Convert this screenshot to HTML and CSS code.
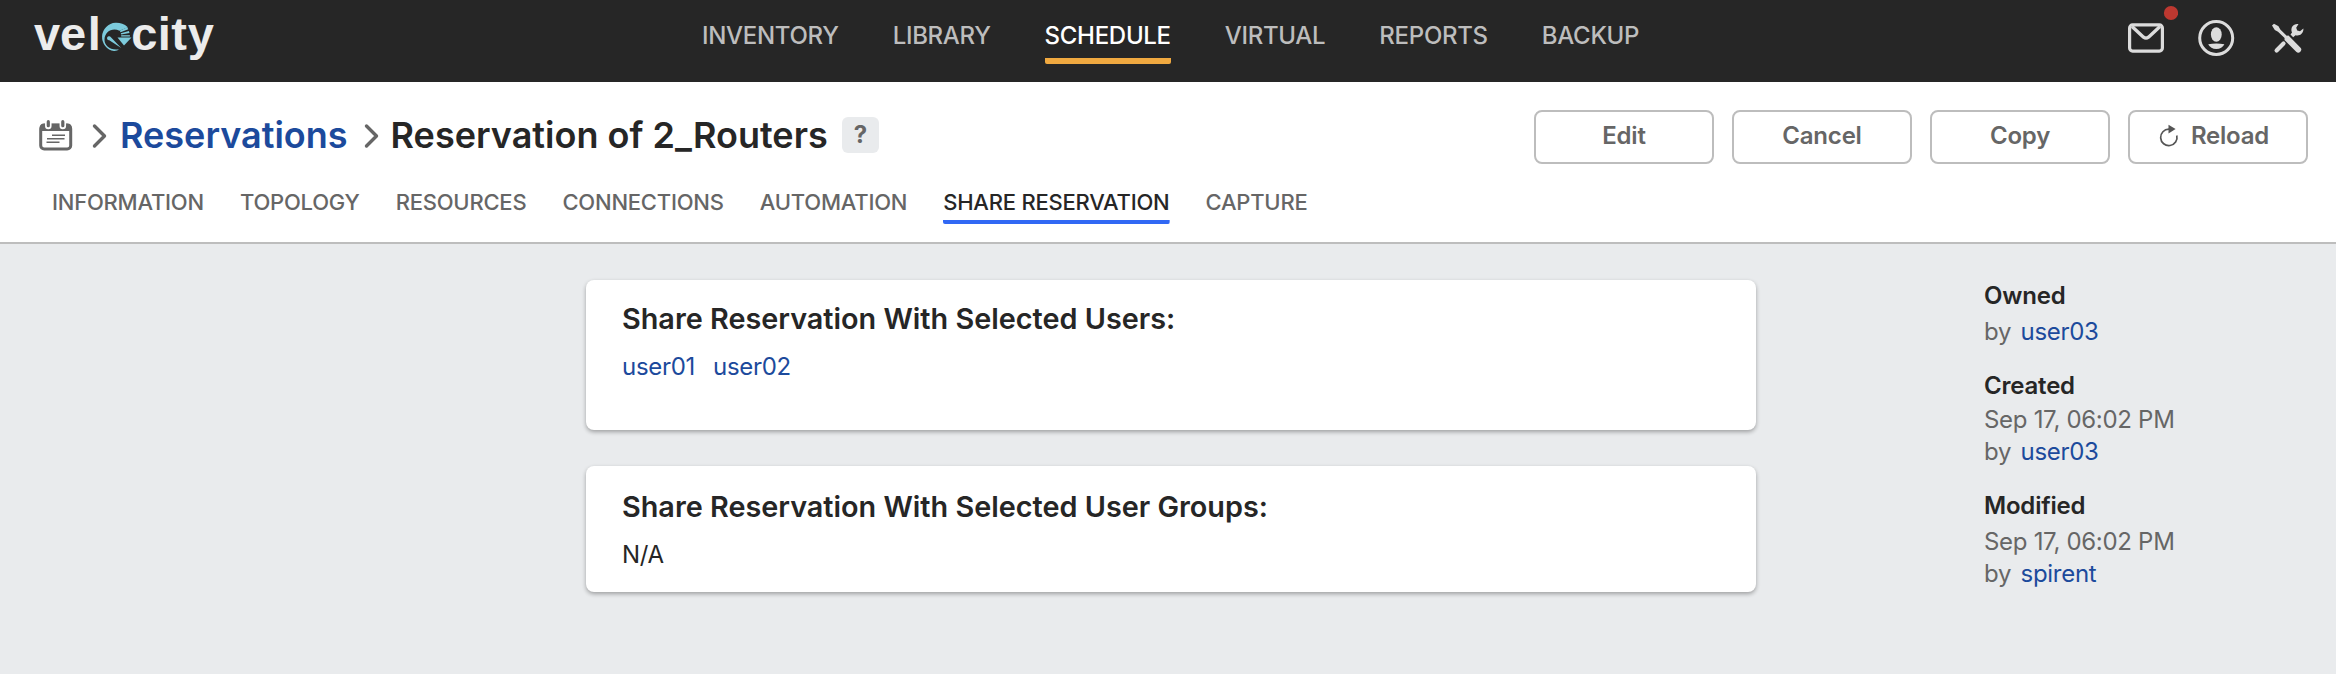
FILE: index.html
```html
<!DOCTYPE html>
<html lang="en">
<head>
<meta charset="utf-8">
<title>Velocity - Reservation of 2_Routers</title>
<link rel="stylesheet" href="styles.css">
</head>
<body>
<header class="topbar">
  <svg class="logo" width="190" height="60" viewBox="30 4 190 60">
    <text class="logo-text" y="49.600" x="34 60 87.700">vel</text>
    <text class="logo-text" y="49.600" x="131.200 157.700 171.300 187.800">city</text>
    <g class="logo-gauge">
      <path d="M127.800 27.200C124 23.500 119.500 22.600 115.500 22.800A14.200 14.200 0 0 0 114 51C116 51.100 118 50.400 118.800 49.300C110 50.500 104.300 45.500 104.500 39.500C104.800 32 112 27.300 119.500 30.800Z"/>
      <path d="M119.800 30.800L127.200 27.300L128.300 29.200L120.500 32.200ZM120.800 33.300L128.900 31L129.500 32.900L121.200 34.600ZM121.200 35.200H129.900V36.600H121.200ZM117.500 37.600H131.500L124 45.400Z"/>
      <path d="M107 38.300A2.100 2.100 0 0 1 110.900 37.200L121.200 48L109.300 40.200A2.100 2.100 0 0 1 107 38.300Z"/>
    </g>
  </svg>
  <nav class="mainnav">
    <a>INVENTORY</a><a>LIBRARY</a><a class="active">SCHEDULE</a><a>VIRTUAL</a><a>REPORTS</a><a>BACKUP</a>
  </nav>
  <div class="tools">
    <svg width="50" height="54" viewBox="2128 4 50 54">
      <g fill="none" stroke="#dcdcdc" stroke-width="3.200"><rect x="2129.600" y="24.900" width="32.800" height="26.200" rx="3"/><path d="M2132 26.500L2143.500 37.200Q2146 39 2148.500 37.200L2160 26.500" stroke-width="3.400"/></g>
      <circle cx="2171" cy="13" r="7.100" fill="#bd3830"/>
    </svg>
    <svg width="38" height="38" viewBox="2197 19 38 38">
      <circle cx="2216.200" cy="38" r="16.500" fill="none" stroke="#dcdcdc" stroke-width="3"/>
      <ellipse cx="2216.300" cy="34.500" rx="5.400" ry="7.300" fill="#dcdcdc"/>
      <path d="M2208.200 44.200Q2216.300 42.600 2224.400 44.200Q2222 48.900 2216.300 48.900Q2210.600 48.900 2208.200 44.200Z" fill="#dcdcdc"/>
    </svg>
    <svg width="36" height="36" viewBox="2270 20 36 36">
      <path d="M2272 25.600L2274 23.800L2278.500 26.300L2280.300 29.400L2286.700 35.700L2288.500 35.400L2300.300 47.500A2.900 2.900 0 0 1 2296.200 51.700L2284.500 40L2284.600 38L2278 31.800L2274.800 30Z" fill="#dcdcdc"/>
      <path d="M2276.600 50.500L2283.500 43.600" stroke="#dcdcdc" stroke-width="4.200" stroke-linecap="round"/>
      <path d="M2290.500 34.600L2292 32.500C2290 27.500 2293.500 23.200 2298.500 24L2296.200 27.700L2297.200 30.500L2300 31.200L2303.400 28.500C2303.800 33.500 2299.500 36.500 2295.500 35.200L2293.200 37.200Z" fill="#dcdcdc"/>
    </svg>
  </div>
</header>
<section class="subheader">
  <div class="titlerow">
    <svg class="cal" width="34" height="32" viewBox="39 120 34 32">
      <rect x="40.700" y="125.200" width="30" height="23.800" rx="3.500" fill="none" stroke="#666" stroke-width="3"/>
      <path d="M40 131V127Q40 123.500 44 123.500H67.500Q71.500 123.500 71.500 127V131Z" fill="#666"/>
      <path d="M48.300 121.500V126M62.800 121.500V126" stroke="#fff" stroke-width="6.500" stroke-linecap="round"/>
      <path d="M48.300 121.700V125.700M62.800 121.700V125.700" stroke="#666" stroke-width="3.200" stroke-linecap="round"/>
      <path d="M52 135.200H65M47 138.700H64.500M46.500 142.300H59.500" stroke="#666" stroke-width="1.600"/>
    </svg>
    <svg class="chev" width="16" height="26" viewBox="0 0 16 26"><path d="M2.500 3L12.500 13L2.500 23"/></svg>
    <a class="crumb">Reservations</a>
    <svg class="chev second" width="16" height="26" viewBox="0 0 16 26"><path d="M2.500 3L12.500 13L2.500 23"/></svg>
    <h1>Reservation of 2_Routers</h1>
    <span class="help">?</span>
    <div class="actions">
      <button>Edit</button><button>Cancel</button><button>Copy</button>
      <button class="reload"><svg width="20" height="24" viewBox="2160 125 20 24"><path d="M2170 130.200A8.200 8.200 0 1 0 2177.800 136.500" fill="none" stroke="#555" stroke-width="1.700"/><path d="M2169.500 125.700L2176.600 130.100L2169.500 134.500Z" fill="#555"/></svg>Reload</button>
    </div>
  </div>
  <nav class="tabs">
    <a>INFORMATION</a><a>TOPOLOGY</a><a>RESOURCES</a><a>CONNECTIONS</a><a>AUTOMATION</a><a class="active">SHARE RESERVATION</a><a>CAPTURE</a>
  </nav>
</section>
<main class="content">
  <div class="cards">
    <section class="card users">
      <h2>Share Reservation With Selected Users:</h2>
      <p class="links"><a>user01</a><a>user02</a></p>
    </section>
    <section class="card groups">
      <h2>Share Reservation With Selected User Groups:</h2>
      <p>N/A</p>
    </section>
  </div>
  <aside class="meta">
    <div class="block"><h3>Owned</h3><p class="first">by <a>user03</a></p></div>
    <div class="block tight"><h3>Created</h3><p class="first">Sep 17, 06:02 PM</p><p>by <a>user03</a></p></div>
    <div class="block"><h3>Modified</h3><p class="first">Sep 17, 06:02 PM</p><p>by <a>spirent</a></p></div>
  </aside>
</main>
</body>
</html>
```
FILE: styles.css
```css
* { box-sizing: border-box; }
body {
  margin: 0;
  height: 674px;
  overflow: hidden;
  display: flex;
  flex-direction: column;
  background: #e9ebed;
  color: #262626;
  font: 24px/32px Inter, "Liberation Sans", sans-serif;
  letter-spacing: -.3px;
}
h1, h2, h3, p { margin: 0; }

.topbar {
  height: 82px;
  flex: none;
  display: flex;
  align-items: flex-start;
  background: #262626;
}
.logo { margin: 4px 0 0 30px; }
.logo-text { font: 700 47px "Liberation Sans", Arial, sans-serif; fill: #ececec; letter-spacing: 0; }
.logo-gauge { fill: #7dcbdc; }
.mainnav {
  display: flex;
  gap: 54px;
  margin: 16px 0 0 482px;
}
.mainnav a {
  height: 48px;
  line-height: 40px;
  font-weight: 500;
  color: #bdbdbd;
  white-space: nowrap;
}
.mainnav .active {
  color: #fff;
  background: linear-gradient(#f0a940, #f0a940) bottom / 100% 6px no-repeat;
  border-radius: 2px;
}
.tools {
  display: flex;
  align-items: flex-start;
  margin: 4px 30px 0 auto;
}
.tools svg:nth-child(2) { margin: 15px 35px 0 19px; }
.tools svg:nth-child(3) { margin-top: 16px; }

.subheader {
  height: 162px;
  flex: none;
  background: #fff;
  border-bottom: 2px solid #bdbdbd;
}
.titlerow {
  display: flex;
  align-items: center;
  height: 54px;
  margin: 28px 28px 0 39px;
  white-space: nowrap;
}
.cal, .chev { margin-top: -2px; }
.chev { margin-left: 19px; fill: none; stroke: #666; stroke-width: 3.4; stroke-linecap: round; stroke-linejoin: round; }
.chev.second { margin-left: 16px; }
.crumb, h1 { font-size: 36px; line-height: 44px; font-weight: 600; margin-top: -4px; letter-spacing: 0; }
.crumb { margin-left: 12px; color: #1c4a9c; }
h1 { margin-left: 11px; }
.help {
  width: 37px;
  height: 36px;
  margin: -4px 0 0 14px;
  border-radius: 6px;
  background: #e9ebed;
  color: #666;
  font-weight: 700;
  line-height: 36px;
  text-align: center;
}
.actions { display: flex; gap: 18px; margin-left: auto; }
button {
  display: flex;
  align-items: center;
  justify-content: center;
  gap: 12px;
  width: 180px;
  height: 54px;
  padding: 0 0 2px;
  border: 2px solid #bdbdbd;
  border-radius: 8px;
  background: #fff;
  color: #666;
  font: 600 24px/32px Inter, "Liberation Sans", sans-serif;
  letter-spacing: -.2px;
}
.reload { padding-right: 8px; }
.tabs {
  display: flex;
  gap: 36px;
  margin: 20px 0 0 52px;
  letter-spacing: -.22px;
}
.tabs a {
  height: 40px;
  font-size: 22px;
  line-height: 36px;
  font-weight: 500;
  color: #666;
}
.tabs .active {
  color: #262626;
  border-radius: 2px;
  background: linear-gradient(#3168f4, #3168f4) bottom / 100% 4px no-repeat;
}

.content { display: flex; align-items: flex-start; }
.cards {
  display: flex;
  flex-direction: column;
  gap: 36px;
  width: 1170px;
  margin: 36px 0 0 586px;
}
.card {
  padding: 21px 36px 0;
  border-radius: 8px;
  background: #fff;
  box-shadow: 0 2px 4px rgba(0, 0, 0, .32);
}
.users { height: 150px; }
.groups { height: 126px; padding-top: 23px; }
h2 { font-size: 28.8px; line-height: 36px; font-weight: 600; letter-spacing: 0; }
.card p { margin-top: 14px; }
.links { display: flex; gap: 18px; }
.card a, .meta a { color: #1c4a9c; }
.meta { margin: 36px 0 0 228px; color: #666; }
.block { margin-bottom: 22px; }
h3 { font-size: 24px; line-height: 32px; font-weight: 600; letter-spacing: -.2px; color: #262626; }
.meta p.first { margin-top: 4px; }
.meta .tight p.first { margin-top: 2px; }
.meta p a { margin-left: 3px; }
```
